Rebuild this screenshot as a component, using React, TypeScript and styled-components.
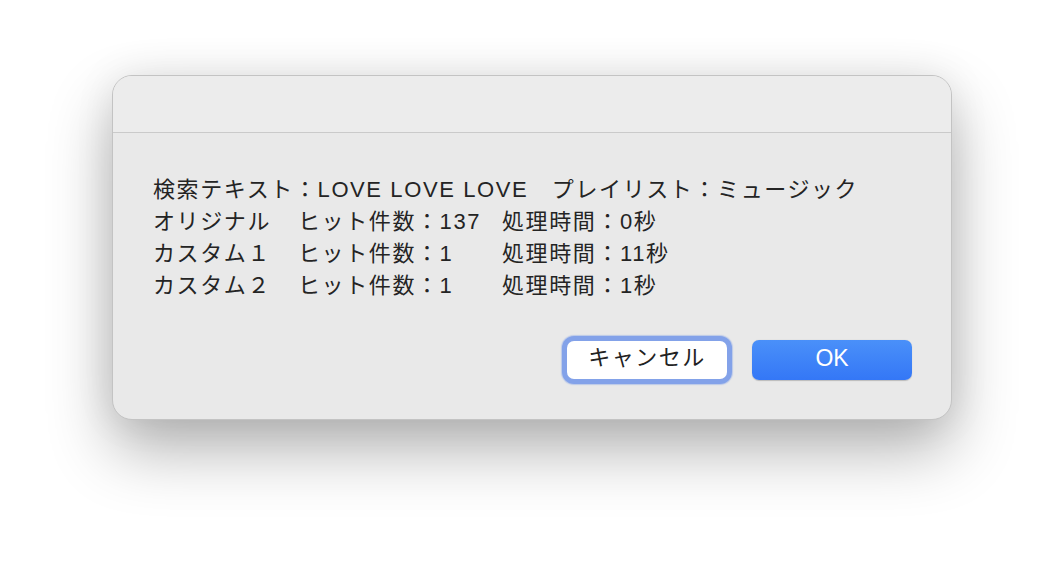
import styled, { createGlobalStyle } from 'styled-components'

const GlobalStyle = createGlobalStyle`
  html, body {
    margin: 0;
    padding: 0;
    background: #ffffff;
  }
  body {
    font-family: "Liberation Sans", "Noto Sans CJK JP", sans-serif;
    -webkit-font-smoothing: antialiased;
  }
`

const Page = styled.div`
  width: 1064px;
  height: 568px;
  padding: 75px 0 0 112px;
  box-sizing: border-box;
  overflow: hidden;
`

const Dialog = styled.div`
  width: 840px;
  height: 345px;
  box-sizing: border-box;
  display: flex;
  flex-direction: column;
  background: #e9e9e9;
  border: 1px solid #c3c3c3;
  border-radius: 20px;
  overflow: hidden;
  box-shadow: 0 30px 64px rgba(0, 0, 0, 0.3), 0 0 40px rgba(0, 0, 0, 0.08);
`

const TitleBar = styled.div`
  height: 56px;
  flex-shrink: 0;
  background: #ececec;
  border-bottom: 1px solid #cacaca;
`

const Body = styled.div`
  flex: 1;
  display: flex;
  flex-direction: column;
  padding: 41px 39px 0 40px;
`

const Info = styled.div`
  display: flex;
  flex-direction: column;
  color: #242424;
  font-size: 22px;
  line-height: 32px;
  letter-spacing: 1.6px;
`

const Line = styled.div`
  white-space: pre;
`

const ResultRow = styled.div`
  display: grid;
  grid-template-columns: 145px 204px auto;
  white-space: pre;
`

const Actions = styled.div`
  display: flex;
  justify-content: flex-end;
  gap: 25px;
  margin-top: 38px;
`

const Button = styled.button<{ $primary?: boolean }>`
  width: 160px;
  height: ${(p) => (p.$primary ? '40px' : '38px')};
  margin-top: ${(p) => (p.$primary ? '0' : '1px')};
  border-radius: 7px;
  border: none;
  font-family: inherit;
  font-size: ${(p) => (p.$primary ? '23px' : '22px')};
  letter-spacing: ${(p) => (p.$primary ? '0' : '1.5px')};
  line-height: 1;
  padding: 0 0 ${(p) => (p.$primary ? '3px' : '4px')};
  cursor: pointer;
  color: ${(p) => (p.$primary ? '#ffffff' : '#222222')};
  background: ${(p) =>
    p.$primary ? 'linear-gradient(#4a90f9, #3477f6)' : '#ffffff'};
  box-shadow: ${(p) =>
    p.$primary
      ? '0 0.5px 1px rgba(0, 0, 0, 0.2)'
      : '0 0 0 5px rgba(118, 152, 232, 0.8), 0 0 1px 6px rgba(118, 152, 232, 0.4)'};
`

const rows = [
  { name: 'オリジナル', hits: '137', time: '0' },
  { name: 'カスタム１', hits: '1', time: '11' },
  { name: 'カスタム２', hits: '1', time: '1' },
]

function App() {
  return (
    <Page>
      <GlobalStyle />
      <Dialog>
        <TitleBar />
        <Body>
          <Info>
            <Line>検索テキスト：LOVE LOVE LOVE　プレイリスト：ミュージック</Line>
            {rows.map((r) => (
              <ResultRow key={r.name}>
                <span>{r.name}</span>
                <span>ヒット件数：{r.hits}</span>
                <span>処理時間：{r.time}秒</span>
              </ResultRow>
            ))}
          </Info>
          <Actions>
            <Button>キャンセル</Button>
            <Button $primary>OK</Button>
          </Actions>
        </Body>
      </Dialog>
    </Page>
  )
}

export default App
